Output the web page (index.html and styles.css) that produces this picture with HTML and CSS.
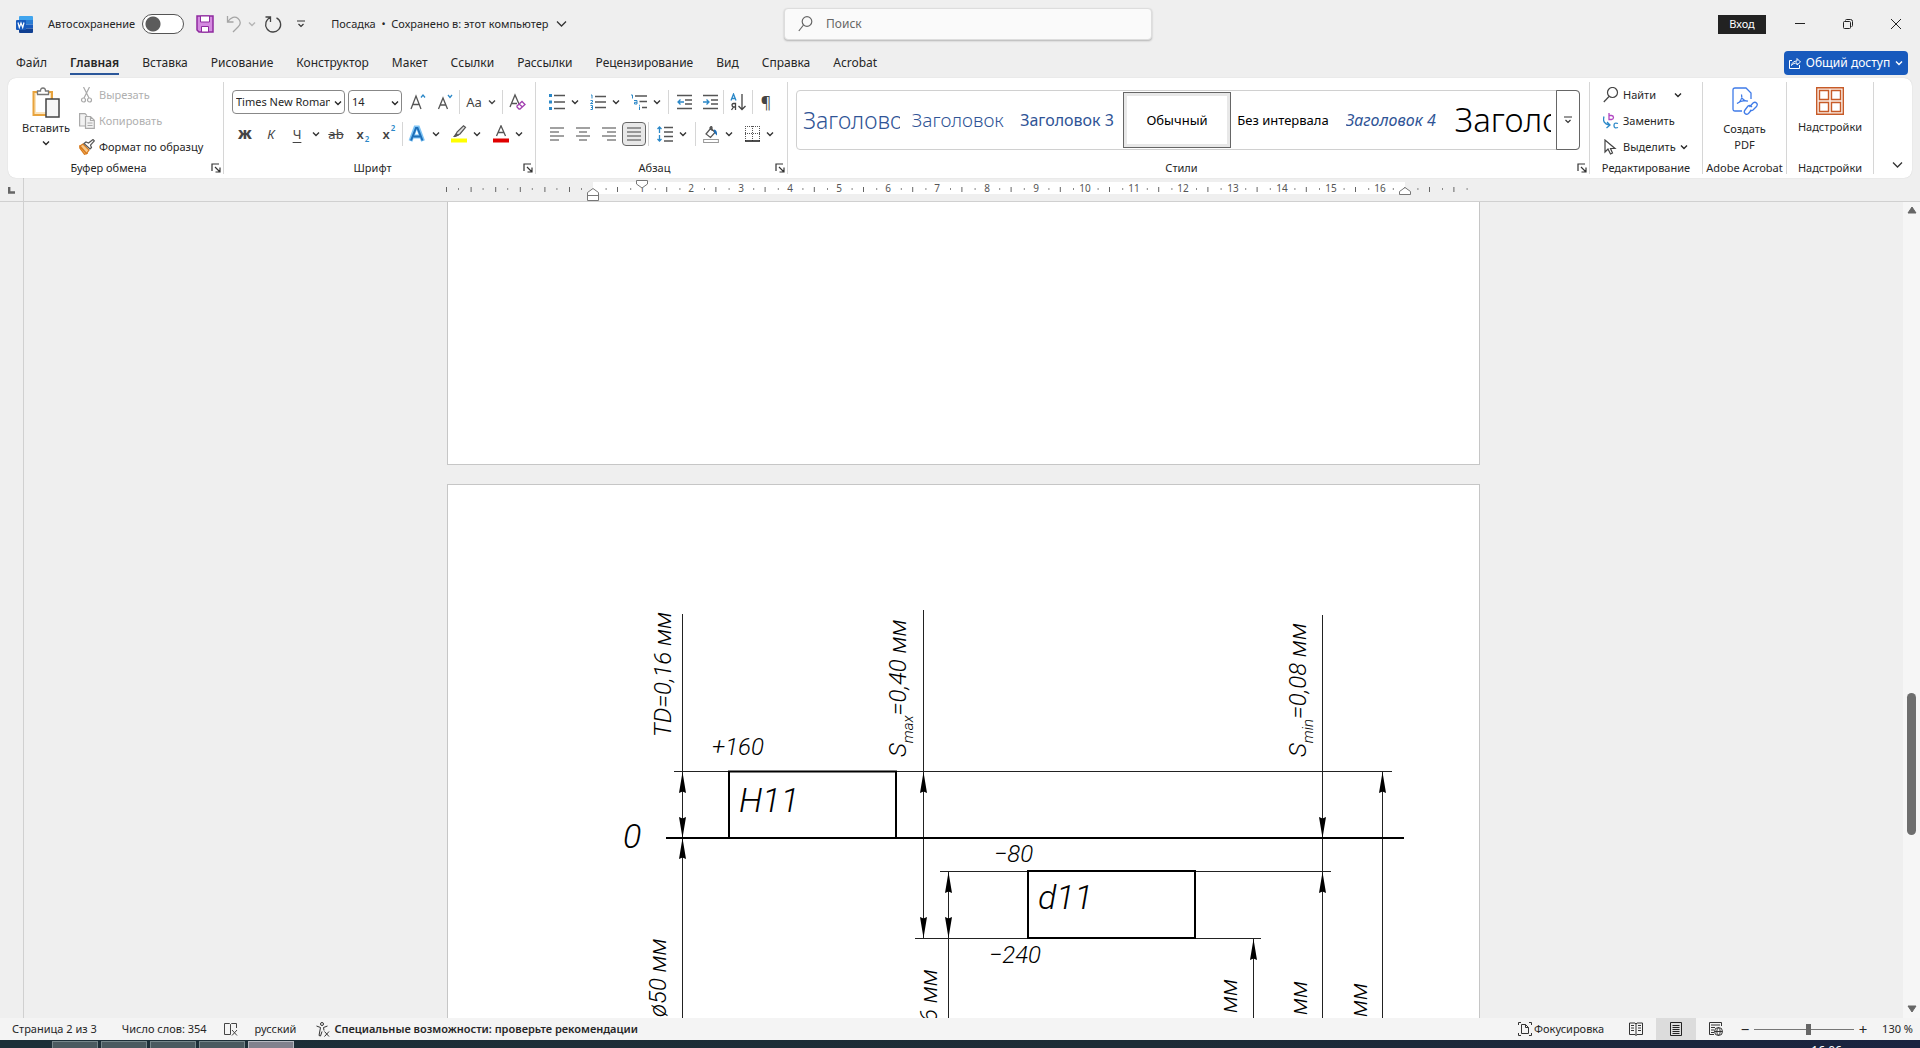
FILE: index.html
```html
<!DOCTYPE html>
<html lang="ru">

<head>
  <meta charset="UTF-8">
  <meta name="viewport" content="width=device-width, initial-scale=1.0">
  <title>Посадка - Word</title>
  <link rel="stylesheet" href="styles.css">
</head>

<body>
  <!-- shared icons -->
  <svg class="defs" width="0" height="0">
    <defs>
      <symbol id="chev" viewBox="0 0 8 8"><path d="M1 2.5l3 3 3-3" fill="none" stroke="currentColor" stroke-width="1.4" /></symbol>
      <symbol id="launch" viewBox="0 0 10 10"><path d="M1 8V1h7M4 4l4.500 4.500M9 4.500V9H4.500" fill="none" stroke="#333" stroke-width="1.200" /></symbol>
      <symbol id="arrow" viewBox="0 0 8 21" overflow="visible"><path d="M4 0L7.500 21L4 19.500L0.500 21z" /></symbol>
    </defs>
  </svg>

  <header class="titlebar">
    <svg class="word-logo" width="17" height="17" viewBox="0 0 17 17">
      <path d="M4 0h12q1 0 1 1v4H3V1q0-1 1-1z" fill="#41a5ee" />
      <path d="M3 4h14v4.500H3z" fill="#2b7cd3" />
      <path d="M3 8.500h14v4H3z" fill="#185abd" />
      <path d="M3 12.500h14V16q0 1-1 1H4q-1 0-1-1z" fill="#103f91" />
      <rect y="4" width="10" height="10" rx="1" fill="#185abd" />
      <path d="M2 6.500l1.300 5L5 7l1.700 4.500L8 6.500" fill="none" stroke="#fff" stroke-width="1.200" />
    </svg>
    <label class="autosave">Автосохранение <input type="checkbox" class="toggle"></label>
    <button class="tool save" aria-label="Сохранить">
      <svg width="18" height="18" viewBox="0 0 18 18">
        <path d="M1 1h16v16H3l-2-2z" fill="#d48ae0" stroke="#8e2a9e" stroke-width="1.500" />
        <path d="M4.500 1h9v6h-9zM5.500 11.500h7V17h-7z" fill="#fff" stroke="#8e2a9e" />
      </svg>
    </button>
    <button class="tool undo" aria-label="Отменить">
      <svg width="16" height="18" viewBox="0 0 16 18" fill="none" stroke="#a5a5a5" stroke-width="1.300">
        <path d="M1.500 1v6h6M1.500 7C5 2 9 1 12 3.500s3 6 0 8.500L7 17" />
      </svg>
      <svg class="chev faded" width="8" height="8"><use href="#chev" /></svg>
    </button>
    <button class="tool redo" aria-label="Повторить">
      <svg width="18" height="18" viewBox="0 0 18 18" fill="none" stroke="#444" stroke-width="1.300">
        <path d="M1.500 2h5v5M6.500 2.500A7.500 7.500 0 1 0 12.500 2.800" />
      </svg>
    </button>
    <button class="tool more" aria-label="Настройка панели">
      <svg width="8" height="8" viewBox="0 0 8 8" fill="none" stroke="#333" stroke-width="1.200"><path d="M0 1h8M1.500 4L4 6.500 6.500 4" /></svg>
    </button>
    <button class="doc-title">Посадка&nbsp; •&nbsp; Сохранено в: этот компьютер
      <svg width="11" height="8" viewBox="0 0 11 8"><path d="M1 1.500l4.500 4.500L10 1.500" fill="none" stroke="#333" stroke-width="1.300" /></svg>
    </button>
    <label class="search">
      <svg width="15" height="16" viewBox="0 0 15 16" fill="none" stroke="#666" stroke-width="1.200"><circle cx="9" cy="5.500" r="4.800" /><path d="M5.500 9L0.800 15" /></svg>
      <input type="text" placeholder="Поиск" aria-label="Поиск">
    </label>
    <div class="window-tools">
      <button class="login">Вход</button>
      <button class="win-btn" aria-label="Свернуть"><svg width="10" height="10" viewBox="0 0 10 10" stroke="#222"><path d="M0 4.500h10" /></svg></button>
      <button class="win-btn" aria-label="Окно"><svg width="10" height="10" viewBox="0 0 10 10" fill="none" stroke="#222"><rect x=".5" y="2.500" width="7" height="7" rx="1" /><path d="M2.500 1.500q0-1 1-1h4q2 0 2 2v4q0 1-1 1" /></svg></button>
      <button class="win-btn" aria-label="Закрыть"><svg width="10" height="10" viewBox="0 0 10 10" stroke="#222"><path d="M0 0l10 10M10 0L0 10" /></svg></button>
    </div>
  </header>

  <nav class="tabs">
    <a href="#">Файл</a>
    <a href="#" class="active">Главная</a>
    <a href="#">Вставка</a>
    <a href="#">Рисование</a>
    <a href="#">Конструктор</a>
    <a href="#">Макет</a>
    <a href="#">Ссылки</a>
    <a href="#">Рассылки</a>
    <a href="#">Рецензирование</a>
    <a href="#">Вид</a>
    <a href="#">Справка</a>
    <a href="#">Acrobat</a>
    <button class="share">
      <svg width="12" height="12" viewBox="0 0 12 12" fill="none" stroke="#fff"><path d="M3 3.500H.5v8h10V8M2.500 8.500C3 5.500 5 4 8 4V1.500l3.500 3.500L8 8V6C5.500 6 4 6.500 2.500 8.500z" /></svg>
      Общий доступ
      <svg width="8" height="8"><use href="#chev" /></svg>
    </button>
  </nav>

  <section class="ribbon">
    <div class="group clipboard">
      <div class="group-body">
        <button class="big paste">
          <svg width="28" height="31" viewBox="0 0 28 31">
            <path d="M1.500 5h18.500v23h-18.500z" fill="#fbe3bb" stroke="#e8a33d" stroke-width="2" />
            <path d="M4 7h14v18H4z" fill="#fff" />
            <path d="M5.500 7.500V4h3q0-3 2.500-3t2.500 3h3v3.500z" fill="#fff" stroke="#777" stroke-width="1.300" />
            <rect x="14" y="12" width="13" height="18" fill="#f6f6f6" stroke="#444" stroke-width="1.500" />
          </svg>
          <span>Вставить</span>
          <svg width="8" height="8"><use href="#chev" /></svg>
        </button>
        <div class="stack">
          <button class="line-btn" disabled>
            <svg width="16" height="16" viewBox="0 0 16 16" fill="none" stroke="#aaa" stroke-width="1.200"><path d="M4.500 0l5.500 11M10.500 0L5 11" /><circle cx="4.500" cy="13" r="2" /><circle cx="10.500" cy="13" r="2" /></svg>
            Вырезать</button>
          <button class="line-btn" disabled>
            <svg width="16" height="16" viewBox="0 0 16 16" fill="#f2f2f2" stroke="#aaa" stroke-width="1.200"><path d="M6 13H.6V.6H6l2 2" /><path d="M6.500 3.500h5l3.800 3.800v8h-8.800zM11.500 3.500v4h3.800M8.500 10h5M8.500 12.500h5" /></svg>
            Копировать</button>
          <button class="line-btn">
            <svg width="16" height="16" viewBox="0 0 16 16" stroke-width="1.200"><path d="M.8 7.500L8 14.500 5.500 15.300.8 9z" fill="#f9b25e" stroke="#d77b1e" /><path d="M1 7l3-2 6 6-2.500 3.500z" fill="#f7c88b" stroke="#d77b1e" /><path d="M5 4.500l2-1.500 2.500 1 4.500-3.500 1.300 1.300L11.500 6l1 2.500L11 10z" fill="#fff" stroke="#555" /></svg>
            Формат по образцу</button>
        </div>
      </div>
      <div class="group-label">Буфер обмена<button class="launcher" aria-label="Буфер обмена"><svg width="10" height="10"><use href="#launch" /></svg></button></div>
    </div>

    <div class="group font">
      <div class="rows">
        <div class="row">
          <label class="combo family"><select aria-label="Шрифт"><option>Times New Roman</option></select><svg width="8" height="8"><use href="#chev" /></svg></label>
          <label class="combo size"><select aria-label="Размер"><option>14</option></select><svg width="8" height="8"><use href="#chev" /></svg></label>
          <button class="ic w26" aria-label="Увеличить размер"><svg width="16" height="18" viewBox="0 0 16 18" fill="none" stroke="#555" stroke-width="1.300"><path d="M1 16L6 3l5 13M3 11.500h6" /><path d="M11 4.500l2-2.500 2 2.500" stroke="#2b88c8" /></svg></button>
          <button class="ic w28" aria-label="Уменьшить размер"><svg width="16" height="18" viewBox="0 0 16 18" fill="none" stroke="#555" stroke-width="1.300"><path d="M1.500 16L6 5l4.500 11M3 12h6" /><path d="M11 2l2 2.500L15 2" stroke="#2b88c8" /></svg></button>
          <i class="sep"></i>
          <button class="ic w42 letter">Aa<svg width="8" height="8"><use href="#chev" /></svg></button>
          <i class="sep"></i>
          <button class="ic w28" aria-label="Удалить форматирование"><svg width="17" height="18" viewBox="0 0 17 18" fill="none" stroke="#555" stroke-width="1.300"><path d="M1 14L6 2l4 9M3 10.500h5" /><path d="M8 13l5-4.500 3 3-5 4.500H10l-2-2zM10 11l3.500 3" stroke="#a23fb0" /></svg></button>
        </div>
        <div class="row">
          <button class="ic w26 letter bold">Ж</button>
          <button class="ic w26 letter italic">К</button>
          <button class="ic w26 letter under">Ч</button>
          <button class="ic w12" aria-label="Подчеркивание"><svg width="8" height="8"><use href="#chev" /></svg></button>
          <button class="ic w28 letter strike">ab</button>
          <button class="ic w26 letter script">x<sub>2</sub></button>
          <button class="ic w26 letter script">x<sup>2</sup></button>
          <i class="sep"></i>
          <button class="ic w42" aria-label="Текстовые эффекты"><svg width="18" height="18" viewBox="0 0 18 18"><path d="M2.500 16L7.500 2.500h2.500L15 16M5.500 11.500h6.500" fill="none" stroke="#7ec4f5" stroke-width="4" /><path d="M3 15.500L8 3h1.500l5 12.500M5.500 11.500h6.500" fill="none" stroke="#1e6fb8" stroke-width="2" /></svg><svg width="8" height="8"><use href="#chev" /></svg></button>
          <button class="ic w42" aria-label="Цвет выделения"><svg width="16" height="18" viewBox="0 0 16 18"><path d="M4.500 11l1.500-4L12.500.8l2 1.500L9 9z" fill="#ddd" stroke="#555" stroke-width="1.200" /><path d="M5 8l3 2.500-4 1.500H2z" fill="#555" /><rect y="13.500" width="16" height="4" fill="#ff0" /></svg><svg width="8" height="8"><use href="#chev" /></svg></button>
          <button class="ic w42" aria-label="Цвет текста"><svg width="16" height="18" viewBox="0 0 16 18"><path d="M3.500 11L8 .8 12.500 11M5 7.500h6" fill="none" stroke="#555" stroke-width="1.300" /><rect y="13.500" width="16" height="4" fill="#e00000" /></svg><svg width="8" height="8"><use href="#chev" /></svg></button>
        </div>
      </div>
      <div class="group-label">Шрифт<button class="launcher" aria-label="Шрифт"><svg width="10" height="10"><use href="#launch" /></svg></button></div>
    </div>

    <div class="group paragraph">
      <div class="rows">
        <div class="row">
          <button class="ic w40" aria-label="Маркеры"><svg width="16" height="16" viewBox="0 0 16 16"><path d="M0 0h3v3H0zM0 6.500h3v3H0zM0 13h3v3H0z" fill="#2b88c8" /><path d="M5 1.500h11M5 8h11M5 14.500h11" stroke="#555" stroke-width="1.300" /></svg><svg width="8" height="8"><use href="#chev" /></svg></button>
          <button class="ic w42" aria-label="Нумерация"><svg width="16" height="16" viewBox="0 0 16 16"><path d="M1 1h1v3.500M.5 6.500h2v1.500l-2 1.500h2.500M.5 11.500h2v4h-2M1 13.500h1.500" fill="none" stroke="#2b88c8" /><path d="M5 2.500h11M5 8h11M5 13.500h11" stroke="#555" stroke-width="1.300" /></svg><svg width="8" height="8"><use href="#chev" /></svg></button>
          <button class="ic w40" aria-label="Многоуровневый список"><svg width="16" height="16" viewBox="0 0 16 16"><path d="M0 1h1.500v3.500M3 6.500h3V10H3.500V8.300H6M8.500 12.500V16M8.500 10.800v1" fill="none" stroke="#2b88c8" /><path d="M4 2h12M8.500 7.500H16M11 13.500h5" stroke="#555" stroke-width="1.300" /></svg><svg width="8" height="8"><use href="#chev" /></svg></button>
          <i class="sep wide"></i>
          <button class="ic w26" aria-label="Уменьшить отступ"><svg width="15" height="16" viewBox="0 0 15 16" fill="none" stroke-width="1.300"><path d="M0 1.500h15M8 6h7M8 10h7M0 14.500h15" stroke="#555" /><path d="M7 8H1M3.500 5.500L1 8l2.500 2.500" stroke="#2b88c8" /></svg></button>
          <button class="ic w26" aria-label="Увеличить отступ"><svg width="15" height="16" viewBox="0 0 15 16" fill="none" stroke-width="1.300"><path d="M0 1.500h15M8 6h7M8 10h7M0 14.500h15" stroke="#555" /><path d="M0 8h6M3.500 5.500L6 8l-2.500 2.500" stroke="#2b88c8" /></svg></button>
          <i class="sep"></i>
          <button class="ic w28" aria-label="Сортировка"><svg width="16" height="18" viewBox="0 0 16 18" fill="none" stroke-width="1.300"><path d="M1 7.500L3.500 1 6 7.500M2 5.500h3" stroke="#2b88c8" /><path d="M5.500 17v-6.500h-2Q2 10.500 2 12t1.500 2h2M3.500 14L1.500 17" stroke="#444" /><path d="M12 1v15.500M8.500 13l3.500 3.500 3.500-3.500" stroke="#444" /></svg></button>
          <i class="sep"></i>
          <button class="ic w26 letter pilcrow">¶</button>
        </div>
        <div class="row">
          <button class="ic w26" aria-label="По левому краю"><svg width="14" height="14" viewBox="0 0 14 14" stroke="#444" stroke-width="1.200"><path d="M0 1h14M0 5h9M0 9h14M0 13h9" /></svg></button>
          <button class="ic w26" aria-label="По центру"><svg width="14" height="14" viewBox="0 0 14 14" stroke="#444" stroke-width="1.200"><path d="M0 1h14M3 5h8M0 9h14M3 13h8" /></svg></button>
          <button class="ic w26" aria-label="По правому краю"><svg width="14" height="14" viewBox="0 0 14 14" stroke="#444" stroke-width="1.200"><path d="M0 1h14M5 5h9M0 9h14M5 13h9" /></svg></button>
          <button class="ic w24 pressed" aria-label="По ширине"><svg width="14" height="14" viewBox="0 0 14 14" stroke="#444" stroke-width="1.200"><path d="M0 1h14M0 5h14M0 9h14M0 13h14" /></svg></button>
          <i class="sep wide"></i>
          <button class="ic w42" aria-label="Интервал"><svg width="16" height="16" viewBox="0 0 16 16" fill="none" stroke-width="1.300"><path d="M7 1.500h9M7 6h9M7 10.500h9M7 15h9" stroke="#555" /><path d="M2.500 7V1M.5 3l2-2 2 2M2.500 9v6M.5 13l2 2 2-2" stroke="#2b88c8" /></svg><svg width="8" height="8"><use href="#chev" /></svg></button>
          <i class="sep wide"></i>
          <button class="ic w40" aria-label="Заливка"><svg width="16" height="17" viewBox="0 0 16 17"><path d="M3 8l5-6 4 4.500-4.500 5zM7 4V1.500q1.500-2 2 0V5" fill="#fff" stroke="#555" stroke-width="1.200" /><path d="M11 3.500q3.500.5 3 6-1.500-1-3-3.500z" fill="#1e6fb8" /><rect x=".6" y="13.500" width="14.800" height="3" fill="#fff" stroke="#999" /></svg><svg width="8" height="8"><use href="#chev" /></svg></button>
          <button class="ic w42" aria-label="Границы"><svg width="15" height="16" viewBox="0 0 15 16" stroke="#555"><path d="M0 .5h15M.5 0v15M14.500 0v15M7.500 0v15M0 7.500h15" stroke-dasharray="1 1" /><path d="M0 15h15" stroke="#222" stroke-width="1.600" /></svg><svg width="8" height="8"><use href="#chev" /></svg></button>
        </div>
      </div>
      <div class="group-label">Абзац<button class="launcher" aria-label="Абзац"><svg width="10" height="10"><use href="#launch" /></svg></button></div>
    </div>

    <div class="group styles">
      <div class="gallery">
        <button class="style h1"><span>Заголовок 1</span></button>
        <button class="style h2"><span>Заголовок 2</span></button>
        <button class="style h3"><span>Заголовок 3</span></button>
        <button class="style selected"><span>Обычный</span></button>
        <button class="style"><span>Без интервала</span></button>
        <button class="style h4"><span>Заголовок 4</span></button>
        <button class="style big-title"><span>Заголовок</span></button>
        <button class="gallery-more" aria-label="Стили"><svg width="8" height="8" viewBox="0 0 8 8" fill="none" stroke="#333" stroke-width="1.200"><path d="M0 1h8M1.500 4L4 6.500 6.500 4" /></svg></button>
      </div>
      <div class="group-label">Стили<button class="launcher" aria-label="Стили"><svg width="10" height="10"><use href="#launch" /></svg></button></div>
    </div>

    <div class="group editing">
      <div class="stack">
        <button class="line-btn">
          <svg width="16" height="16" viewBox="0 0 16 16" fill="none" stroke="#444" stroke-width="1.200"><circle cx="9.500" cy="5.500" r="5" /><path d="M6 9.500L.8 15" /></svg>
          Найти <svg class="chev far" width="8" height="8"><use href="#chev" /></svg></button>
        <button class="line-btn">
          <svg width="16" height="16" viewBox="0 0 16 16" fill="none" stroke-width="1.300"><path d="M6 0v6.500h2.500q2-.2 2-2t-2-2H6" stroke="#b146c2" /><path d="M15 10.500q-4-1.500-4 2t4 2M1 3.500q-2 7 5 8.500M4 9l3 3-3.500 3" stroke="#2b88c8" /></svg>
          Заменить</button>
        <button class="line-btn">
          <svg width="16" height="16" viewBox="0 0 16 16" fill="none" stroke="#444" stroke-width="1.200"><path d="M2 1v12l3-3 2.500 5 2-1L7.500 9.500H12z" /></svg>
          Выделить<svg class="chev" width="8" height="8"><use href="#chev" /></svg></button>
      </div>
      <div class="group-label">Редактирование</div>
    </div>

    <div class="group acrobat">
      <button class="big">
        <svg width="26" height="30" viewBox="0 0 26 30" fill="none" stroke="#3f7be8" stroke-width="1.300">
          <path d="M10 24H3q-2 0-2-2V3q0-2 2-2h11l5 5v6" />
          <path d="M5 16.500C9 15 10.500 10 9.500 7.500M9.500 7.500C9 11 12 14.500 16 14M5 16.500C8 14 12 13 16 14" stroke-width="1.200" />
          <path d="M17.500 20l3.500-4q2-1.500 3.500 0t0 3.500L21 23q-1.500 1-3 0M20 20l-1-1q-1.500-1-3 0l-3 4q-1.500 2 0 3.500t3.500 0l2.500-3" />
        </svg>
        <span>Создать<br>PDF</span>
      </button>
      <div class="group-label">Adobe Acrobat</div>
    </div>

    <div class="group addins">
      <button class="big">
        <svg width="28" height="28" viewBox="0 0 28 28" fill="#fff" stroke="#c75b28" stroke-width="1.400"><path d="M.7.7h26.600v26.600H.7z" fill="#fbeee6" /><path d="M3.500 3.500h9v9h-9zM15.500 3.500h9v9h-9zM3.500 15.500h9v9h-9zM15.500 15.500h9v9h-9z" /></svg>
        <span>Надстройки</span>
      </button>
      <div class="group-label">Надстройки</div>
    </div>

    <button class="collapse" aria-label="Свернуть ленту"><svg width="11" height="8" viewBox="0 0 11 8"><path d="M1 1.500l4.500 4.500L10 1.500" fill="none" stroke="#333" stroke-width="1.300" /></svg></button>
  </section>

  <div class="ruler">
    <div class="corner"><svg width="7" height="7" viewBox="0 0 7 7"><path d="M1.200 0v5.500H7" fill="none" stroke="#666" stroke-width="2.400" /></svg></div>
    <div class="ruler-track">
      <svg width="1033" height="24" viewBox="0 0 1033 24">
        <rect x="146" y="4" width="812" height="12" fill="#fff" />
        <!-- half-centimetre ticks and quarter dots -->
        <path d="M-1 11.500H140" stroke="#666" stroke-width="5" stroke-dasharray="1 23.600" />
        <path d="M11 11H1024" stroke="#888" stroke-width="2" stroke-dasharray="1 23.600" />
        <path d="M170 11.500H1012" stroke="#666" stroke-width="5" stroke-dasharray="1 48.200" />
        <path d="M982 11.500h1" stroke="#666" stroke-width="5" />
        <g class="ruler-num">
          <text x="195" y="14">1</text><text x="244" y="14">2</text><text x="294" y="14">3</text><text x="343" y="14">4</text>
          <text x="392" y="14">5</text><text x="441" y="14">6</text><text x="490" y="14">7</text><text x="540" y="14">8</text>
          <text x="589" y="14">9</text><text x="638" y="14">10</text><text x="687" y="14">11</text><text x="736" y="14">12</text>
          <text x="786" y="14">13</text><text x="835" y="14">14</text><text x="884" y="14">15</text><text x="933" y="14">16</text>
        </g>
        <g fill="#fff" stroke="#777">
          <path d="M140.500 22.500v-8l5.500-4 5.500 4v8zM140.500 17.500h11" />
          <path d="M189.500 2.500h11v3.500l-5.500 4-5.500-4z" />
          <path d="M952.500 16.500v-3l5.500-4 5.500 4v3z" />
        </g>
      </svg>
    </div>
  </div>

  <main class="workspace">
    <div class="v-ruler"></div>
    <div class="canvas">
      <div class="page page-prev"></div>
      <div class="page page-current">
        <svg class="drawing" width="811" height="434" viewBox="0 0 811 434">
          <g stroke="#222" stroke-width="1">
            <path d="M81 187.500H799M347 287.500H738M322 354.500H668" />
            <path d="M89.500 30V434M330.500 26V354M355.500 287V434M660.500 354V434M729.500 31V434M789.500 187V434" />
          </g>
          <g fill="none" stroke="#000" stroke-width="2">
            <path d="M73 254H811" />
            <path d="M136 254V187.500H303V254" />
            <rect x="435" y="287" width="167" height="67" />
          </g>
          <g>
            <use href="#arrow" x="85.500" y="188" width="8" height="21" />
            <use href="#arrow" x="85.500" y="254" width="8" height="21" />
            <use href="#arrow" x="326.500" y="188" width="8" height="21" />
            <use href="#arrow" x="351.500" y="288" width="8" height="21" />
            <use href="#arrow" x="656.500" y="355" width="8" height="21" />
            <use href="#arrow" x="725.500" y="288" width="8" height="21" />
            <use href="#arrow" x="785.500" y="188" width="8" height="21" />
            <path d="M89.500 254l-3.500-21 3.500 1.500 3.500-1.500zM330.500 354l-3.500-21 3.500 1.500 3.500-1.500zM355.500 354l-3.500-21 3.500 1.500 3.500-1.500zM729.500 254l-3.500-21 3.500 1.500 3.500-1.500z" />
          </g>
          <g class="note">
            <text x="119" y="171">+160</text>
            <text x="401" y="278">−80</text>
            <text x="396" y="379">−240</text>
            <text transform="translate(78 153) rotate(-90)">TD=0,16 мм</text>
            <text transform="translate(313 173) rotate(-90)">S<tspan class="sub" dy="7">max</tspan><tspan dy="-7">=0,40 мм</tspan></text>
            <text transform="translate(713 173) rotate(-90)">S<tspan class="sub" dy="7">min</tspan><tspan dy="-7">=0,08 мм</tspan></text>
            <text transform="translate(73 433) rotate(-90)">ø50 мм</text>
            <text transform="translate(344 438) rotate(-90)">6 мм</text>
            <text transform="translate(644 429) rotate(-90)">мм</text>
            <text transform="translate(714 431) rotate(-90)">мм</text>
            <text transform="translate(774 433) rotate(-90)">мм</text>
          </g>
          <g class="note large">
            <text x="146" y="228">H11</text>
            <text x="30" y="264">0</text>
            <text x="445" y="325">d11</text>
          </g>
        </svg>
      </div>
    </div>
    <div class="scrollbar">
      <svg width="10" height="8" viewBox="0 0 10 8"><path d="M5 1l4 6H1z" fill="#666" stroke="#666" /></svg>
      <div class="thumb"></div>
      <svg width="10" height="8" viewBox="0 0 10 8"><path d="M5 7l4-6H1z" fill="#666" stroke="#666" /></svg>
    </div>
  </main>

  <footer class="status">
    <span class="st-page">Страница 2 из 3</span>
    <span class="st-words">Число слов: 354</span>
    <svg class="st-proof" width="14" height="14" viewBox="0 0 14 14" fill="none" stroke="#444"><path d="M6.500 12.500H.5V1.500h5l1 1 1-1h5V6M6.500 2.500v10M8 8l5 5.500M13 8l-5 5.500" /></svg>
    <span class="st-lang">русский</span>
    <button class="st-access"><svg width="14" height="15" viewBox="0 0 14 15" fill="none" stroke="#333"><circle cx="6" cy="2" r="1.500" /><path d="M.5 4l4 1.500L3 13.500l1.500.5L6 9.500M11.500 4l-4 1.500.5 3M8.500 9.500l4.500 5M13 9.500l-4.500 5" /></svg>Специальные возможности: проверьте рекомендации</button>
    <div class="status-right">
      <button class="focus"><svg width="14" height="14" viewBox="0 0 14 14" fill="none" stroke="#333"><path d="M3 .5H.5V3M11 .5h2.500V3M3 13.500H.5V11M11 13.500h2.500V11M3.500 2.500h4l3 3v6h-7zM7.500 2.500v3h3" /></svg>Фокусировка</button>
      <button class="view" aria-label="Режим чтения"><svg width="14" height="14" viewBox="0 0 14 14" fill="none" stroke="#333"><path d="M7 2v11.500L6 12.500H.5V1H6zl1-1h5.500v11.500H8l-1 1M2 3.500h3M2 6h3M2 8.500h3M9 3.500h3M9 6h3M9 8.500h3" /></svg></button>
      <button class="view on" aria-label="Разметка страницы"><svg width="12" height="14" viewBox="0 0 12 14" fill="none" stroke="#222"><path d="M.5.5h11v13H.5zM2.500 3.500h7M2.500 5.500h7M2.500 7.500h7M2.500 9.500h7M2.500 11.500h7" /></svg></button>
      <button class="view" aria-label="Веб-документ"><svg width="14" height="14" viewBox="0 0 14 14" fill="none" stroke="#333"><path d="M12.500 4V.5H.5v12H5M2 3h9M2 5.500h4M2 8h3M2 10.500h3" /><circle cx="9.500" cy="9.500" r="4" /><path d="M5.500 9.500h8M9.500 5.500q-3.500 4 0 8 3.500-4 0-8" /></svg></button>
      <button class="zoom-step" aria-label="Уменьшить">−</button>
      <input type="range" class="zoom" min="0" max="200" value="110" aria-label="Масштаб">
      <button class="zoom-step" aria-label="Увеличить">+</button>
      <span class="zoom-value">130 %</span>
    </div>
  </footer>

  <div class="taskbar">
    <i></i><i></i><i></i><i></i><i class="current"></i>
    <span class="clock">16:06</span>
  </div>
</body>

</html>
```
FILE: styles.css
```css
* {
  margin: 0;
  padding: 0;
  box-sizing: border-box;
}

body {
  height: 100vh;
  display: flex;
  flex-direction: column;
  overflow: hidden;
  font-family: "Noto Sans", "Open Sans", sans-serif;
  font-size: 12px;
  line-height: 16px;
  color: #262626;
  background-color: #efefef;
}

button,
input,
select {
  font: inherit;
  color: inherit;
  border: none;
  background: none;
}

button {
  white-space: nowrap;
}

svg {
  flex: none;
  display: block;
}

.defs {
  position: absolute;
}

/* title bar */
.titlebar {
  position: relative;
  flex: none;
  height: 48px;
  display: flex;
  align-items: center;
  padding-left: 16px;
}

.autosave {
  display: flex;
  align-items: center;
  gap: 7px;
  margin-left: 15px;
  font-size: 11px;
}

.toggle {
  appearance: none;
  width: 42px;
  height: 20px;
  border: 1px solid #555;
  border-radius: 10px;
  background: radial-gradient(circle at 10px 9px, #5c5c5c 7px, #fff 8px);
}

.tool {
  display: flex;
  align-items: center;
}

.save {
  margin-left: 12px;
}

.undo {
  gap: 6px;
  margin-left: 12px;
}

.faded {
  color: #b5b5b5;
}

.redo {
  margin-left: 8px;
}

.more {
  margin-left: 15px;
}

.doc-title {
  display: flex;
  align-items: center;
  gap: 8px;
  margin-left: 26px;
  font-size: 11px;
}

.search {
  position: absolute;
  left: 50%;
  top: 8px;
  width: 368px;
  height: 32px;
  margin-left: -176px;
  display: flex;
  align-items: center;
  gap: 13px;
  padding-left: 13px;
  background-color: #fafafa;
  border: 1px solid #ddd;
  border-radius: 4px;
  box-shadow: 0 1px 2px rgba(0, 0, 0, 0.25);
}

.search input {
  flex: 1;
  outline: none;
}

.search input::placeholder {
  color: #666;
}

.window-tools {
  display: flex;
  align-items: center;
  margin-left: auto;
}

.login {
  width: 48px;
  height: 19px;
  margin-right: 10px;
  font-size: 11px;
  color: #fff;
  background-color: #222;
}

.win-btn {
  width: 48px;
  height: 32px;
  display: flex;
  align-items: center;
  justify-content: center;
}

/* tabs */
.tabs {
  flex: none;
  height: 30px;
  display: flex;
  align-items: flex-start;
  gap: 23px;
  padding: 4px 12px 0 16px;
}

.tabs a {
  height: 23px;
  line-height: 22px;
  color: #262626;
  text-decoration: none;
}

.tabs .active {
  font-weight: 600;
  border-bottom: 2px solid #2b579a;
}

.share {
  width: 124px;
  height: 24px;
  margin: -1px 0 0 auto;
  display: flex;
  align-items: center;
  justify-content: center;
  gap: 5px;
  color: #fff;
  background-color: #185abd;
  border-radius: 4px;
}

/* ribbon */
.ribbon {
  position: relative;
  flex: none;
  height: 100px;
  display: flex;
  margin: 0 8px;
  padding: 4px 0;
  background-color: #fff;
  border-radius: 8px;
  box-shadow: 0 0 1px rgba(0, 0, 0, 0.2);
  font-size: 11px;
}

.group {
  flex: none;
  display: flex;
  flex-direction: column;
  justify-content: space-between;
  border-right: 1px solid #d6d6d6;
}

.clipboard {
  width: 216px;
}

.font {
  width: 312px;
}

.paragraph {
  width: 252px;
}

.styles {
  flex: 1;
  min-width: 0;
}

.editing {
  width: 113px;
}

.acrobat {
  width: 84px;
}

.addins {
  width: 87px;
  margin-right: 38px;
}

.group-label {
  position: relative;
  text-align: center;
  line-height: 12px;
}

.clipboard .group-label,
.font .group-label,
.paragraph .group-label,
.styles .group-label {
  padding-right: 14px;
}

.launcher {
  position: absolute;
  right: 2px;
  bottom: 1px;
}

.group-body {
  display: flex;
}

.big {
  display: flex;
  flex-direction: column;
  align-items: center;
  line-height: 16px;
  padding-top: 5px;
}

.big span {
  margin-top: 4px;
}

.paste {
  width: 60px;
  height: 78px;
  margin-left: 8px;
}

.paste span {
  margin: 2px 0 3px;
}

.stack {
  display: flex;
  flex-direction: column;
  padding: 0 0 0 3px;
}

.line-btn {
  height: 26px;
  display: flex;
  align-items: center;
  gap: 4px;
}

.line-btn:disabled {
  color: #b0b0b0;
}

.editing .stack {
  padding-left: 13px;
}

.line-btn .far {
  margin-left: 14px;
}

.rows {
  display: flex;
  flex-direction: column;
  gap: 8px;
  padding: 8px 0 0 8px;
}

.row {
  height: 24px;
  display: flex;
  align-items: center;
}

.combo {
  position: relative;
  height: 24px;
  margin-right: 3px;
  border: 1px solid #888;
  border-radius: 4px;
}

.combo select {
  appearance: none;
  width: 100%;
  height: 22px;
  padding: 0 14px 0 3px;
  outline: none;
}

.combo svg {
  position: absolute;
  right: 2px;
  top: 8px;
}

.family {
  width: 113px;
}

.size {
  width: 54px;
}

.ic {
  height: 24px;
  display: flex;
  align-items: center;
  justify-content: center;
  gap: 6px;
  color: #333;
}

.w12 { width: 12px; }
.w24 { width: 24px; }
.w26 { width: 26px; }
.w28 { width: 28px; }
.w40 { width: 40px; }
.w42 { width: 42px; }

.sep {
  width: 1px;
  height: 24px;
  background-color: #d6d6d6;
}

.wide {
  margin: 0 2px;
}

.letter {
  font-size: 13px;
  color: #444;
}

.bold { font-weight: 900; }
.italic { font-style: italic; }
.under { text-decoration: underline; text-underline-offset: 3px; }
.strike { text-decoration: line-through; }

.script {
  gap: 1px;
  font-weight: 600;
}

.script sub,
.script sup {
  font-size: 8px;
  color: #2b88c8;
}

.script sub { margin-top: 10px; }
.script sup { margin-bottom: 12px; }

.pilcrow {
  font-size: 16px;
}

.pressed {
  background-color: #e8e8e8;
  border: 1px solid #666;
  border-radius: 4px;
}

/* styles gallery */
.gallery {
  display: flex;
  height: 60px;
  margin: 8px 9px 0 8px;
  border: 1px solid #d0d0d0;
  border-radius: 4px;
}

.style {
  flex: 1 1 0;
  min-width: 0;
  margin: 1px 0;
  padding: 0 5px;
  border: 1px solid transparent;
  font-size: 13px;
  line-height: 40px;
  color: #000;
}

.style span {
  display: block;
  overflow: hidden;
  text-align: left;
}

.selected {
  border-color: #666;
  box-shadow: inset 0 0 0 3px #e8e8e8;
}

.selected span {
  text-align: center;
}

.h1,
.h2,
.h3,
.h4 {
  color: #2f5496;
}

.h1 {
  font-size: 23px;
  font-weight: 300;
}

.h2 {
  font-size: 19px;
  font-weight: 300;
}

.h3 {
  font-size: 16px;
}

.h4 {
  font-size: 16px;
  font-style: italic;
}

.big-title {
  font-size: 33px;
  font-weight: 300;
}

.gallery-more {
  width: 24px;
  margin: -1px;
  display: flex;
  align-items: center;
  justify-content: center;
  border: 1px solid #666;
  border-radius: 0 4px 4px 0;
}

.collapse {
  position: absolute;
  right: 9px;
  bottom: 9px;
}

/* ruler */
.ruler {
  flex: none;
  height: 24px;
  display: flex;
  border-bottom: 1px solid #d0d0d0;
}

.corner {
  width: 24px;
  padding: 9px 0 0 8px;
  border-right: 1px solid #d0d0d0;
}

.ruler-track {
  flex: 1;
  display: flex;
  justify-content: center;
  padding-right: 17px;
}

.ruler-track svg {
  overflow: visible;
}

.ruler-num {
  font-size: 10px;
  fill: #555;
  text-anchor: middle;
}

/* document */
.workspace {
  flex: 1;
  min-height: 0;
  display: flex;
}

.v-ruler {
  width: 24px;
  border-right: 1px solid #d0d0d0;
}

.canvas {
  flex: 1;
  overflow: hidden;
}

.page {
  width: 1033px;
  margin: 0 auto;
  background-color: #fff;
  border: 1px solid #c6c6c6;
}

.page-prev {
  height: 263px;
  border-top: none;
}

.page-current {
  height: 1462px;
  margin-top: 19px;
  padding: 99px 74px 0 145px;
}

.drawing {
  overflow: visible;
}

.note {
  font-family: Roboto, "Open Sans", sans-serif;
  font-style: italic;
  font-weight: 300;
  font-size: 24px;
}

.note .sub {
  font-size: 15px;
}

.large {
  font-size: 34px;
}

.scrollbar {
  width: 17px;
  display: flex;
  flex-direction: column;
  align-items: center;
  justify-content: space-between;
  padding: 4px 0 5px;
  background-color: #f6f6f6;
}

.thumb {
  width: 9px;
  height: 142px;
  margin-top: 308px;
  border-radius: 5px;
  background-color: #6e6e6e;
}

/* status bar */
.status {
  flex: none;
  height: 22px;
  display: flex;
  align-items: center;
  padding: 0 7px 0 12px;
  font-size: 11px;
  background-color: #f4f4f4;
}

.st-words {
  margin-left: 25px;
}

.st-proof {
  margin-left: 17px;
}

.st-lang {
  margin-left: 17px;
}

.st-access {
  display: flex;
  align-items: center;
  gap: 4px;
  margin-left: 20px;
  font-weight: 600;
}

.status-right {
  display: flex;
  align-items: center;
  margin-left: auto;
}

.focus {
  display: flex;
  align-items: center;
  gap: 2px;
  margin-right: 12px;
}

.view {
  width: 40px;
  height: 22px;
  display: flex;
  align-items: center;
  justify-content: center;
}

.on {
  background-color: #dcdcdc;
}

.zoom-step {
  width: 18px;
  font-size: 15px;
}

.zoom {
  appearance: none;
  width: 100px;
  height: 12px;
  background: linear-gradient(#777, #777) center / 100% 1px no-repeat;
}

.zoom::-webkit-slider-thumb {
  appearance: none;
  width: 5px;
  height: 11px;
  background-color: #666;
}

.zoom-value {
  margin-left: 10px;
}

/* taskbar */
.taskbar {
  flex: none;
  height: 8px;
  display: flex;
  align-items: flex-start;
  gap: 3px;
  padding: 1px 78px 0 52px;
  overflow: hidden;
  background: linear-gradient(90deg, #1c2f38, #1d2c36 60%, #1a2340);
}

.taskbar i {
  width: 46px;
  height: 8px;
  border: 1px solid #76878b;
  background-color: #4a5a60;
}

.taskbar .current {
  border-color: #b5b8c0;
  background-color: #80818d;
}

.clock {
  margin: 2px 0 0 auto;
  color: #fff;
}
```
